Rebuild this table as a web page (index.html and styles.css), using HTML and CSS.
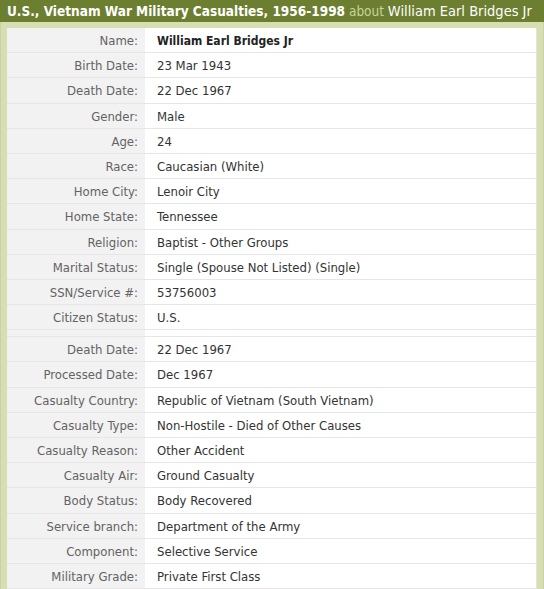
FILE: index.html
```html
<!DOCTYPE html>
<html>
<head>
<meta charset="utf-8">
<link rel="stylesheet" href="styles.css">
</head>
<body>
<div class="panel">
  <h1 class="title"><span class="coll">U.S., Vietnam War Military Casualties, 1956-1998</span> <span class="about">about</span> <span class="person">William Earl Bridges Jr</span></h1>
  <div class="frame">
    <div class="facts">
      <div class="row"><div class="lbl">Name:</div><div class="val strong">William Earl Bridges Jr</div></div>
      <div class="row"><div class="lbl">Birth Date:</div><div class="val">23 Mar 1943</div></div>
      <div class="row"><div class="lbl">Death Date:</div><div class="val">22 Dec 1967</div></div>
      <div class="row"><div class="lbl">Gender:</div><div class="val">Male</div></div>
      <div class="row"><div class="lbl">Age:</div><div class="val">24</div></div>
      <div class="row"><div class="lbl">Race:</div><div class="val">Caucasian (White)</div></div>
      <div class="row"><div class="lbl">Home City:</div><div class="val">Lenoir City</div></div>
      <div class="row"><div class="lbl">Home State:</div><div class="val">Tennessee</div></div>
      <div class="row"><div class="lbl">Religion:</div><div class="val">Baptist - Other Groups</div></div>
      <div class="row"><div class="lbl">Marital Status:</div><div class="val">Single (Spouse Not Listed) (Single)</div></div>
      <div class="row"><div class="lbl">SSN/Service #:</div><div class="val">53756003</div></div>
      <div class="row"><div class="lbl">Citizen Status:</div><div class="val">U.S.</div></div>
      <div class="row spacer"><div class="lbl"></div><div class="val"></div></div>
      <div class="row"><div class="lbl">Death Date:</div><div class="val">22 Dec 1967</div></div>
      <div class="row"><div class="lbl">Processed Date:</div><div class="val">Dec 1967</div></div>
      <div class="row"><div class="lbl">Casualty Country:</div><div class="val">Republic of Vietnam (South Vietnam)</div></div>
      <div class="row"><div class="lbl">Casualty Type:</div><div class="val">Non-Hostile - Died of Other Causes</div></div>
      <div class="row"><div class="lbl">Casualty Reason:</div><div class="val">Other Accident</div></div>
      <div class="row"><div class="lbl">Casualty Air:</div><div class="val">Ground Casualty</div></div>
      <div class="row"><div class="lbl">Body Status:</div><div class="val">Body Recovered</div></div>
      <div class="row"><div class="lbl">Service branch:</div><div class="val">Department of the Army</div></div>
      <div class="row"><div class="lbl">Component:</div><div class="val">Selective Service</div></div>
      <div class="row"><div class="lbl">Military Grade:</div><div class="val">Private First Class</div></div>
    </div>
  </div>
</div>
</body>
</html>
```

FILE: styles.css
```css
html, body {
  margin: 0;
  padding: 0;
  background: #ffffff;
}
body {
  font-family: "DejaVu Sans Condensed", "DejaVu Sans", sans-serif;
  font-size: 13px;
}
.panel {
  background: #d6deb2;
  border-left: 1px solid #c9d39f;
  border-right: 1px solid #c9d39f;
  min-height: 589px;
  box-sizing: border-box;
}
.title {
  margin: 0 -1px;
  height: 22px;
  line-height: 23px;
  padding: 0 7px;
  background: #6c7e30;
  color: #ffffff;
  font-size: 13.5px;
  font-weight: normal;
  white-space: nowrap;
  overflow: hidden;
}
.coll {
  font-weight: bold;
}
.about {
  color: #c8d29a;
}
.person {
  font-size: 14.5px;
}
.frame {
  padding: 6px 6px 0 6px;
}
.facts {
  background: #ffffff;
  border-right: 1px solid #e4e4e4;
}
.row {
  display: grid;
  grid-template-columns: 138px 1fr;
  height: 25.2px;
  box-sizing: border-box;
  border-bottom: 1px solid #e6e6e6;
}
.row.spacer {
  height: 7px;
}
.lbl {
  background: #f2f2f2;
  color: #636363;
  text-align: right;
  padding: 2px 7px 0 0;
  line-height: 22px;
}
.val {
  color: #333333;
  padding: 2px 0 0 12px;
  line-height: 22px;
  white-space: nowrap;
}
.val.strong {
  font-weight: bold;
  font-size: 12px;
  color: #222222;
}
```
